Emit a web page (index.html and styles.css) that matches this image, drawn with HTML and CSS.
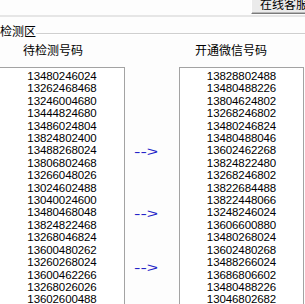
FILE: index.html
```html
<!DOCTYPE html>
<html>
<head>
    <meta charset="utf-8" />
    <title>检测区</title>
    <link rel="stylesheet" href="styles.css">
</head>
<body>
    <div class="top_bar">
        <button class="btn_service">在线客服</button>
    </div>
    <div class="top_line"></div>

    <div class="group_title">
        <span>检测区</span>
        <div class="group_line"></div>
    </div>

    <div class="check_grid">
        <div class="col_title col_title_left">待检测号码</div>
        <div></div>
        <div class="col_title col_title_right">开通微信号码</div>

        <div class="num_box">
            <div>13480246024</div>
            <div>13262468468</div>
            <div>13246004680</div>
            <div>13444824680</div>
            <div>13486024804</div>
            <div>13824802400</div>
            <div>13488268024</div>
            <div>13806802468</div>
            <div>13266048026</div>
            <div>13024602488</div>
            <div>13040024600</div>
            <div>13480468048</div>
            <div>13824822468</div>
            <div>13268046824</div>
            <div>13600480262</div>
            <div>13260268024</div>
            <div>13600462266</div>
            <div>13268026026</div>
            <div>13602600488</div>
        </div>

        <div class="arrow_col">
            <div class="arrow arrow_1">--&gt;</div>
            <div class="arrow arrow_2">--&gt;</div>
            <div class="arrow arrow_3">--&gt;</div>
        </div>

        <div class="num_box">
            <div>13828802488</div>
            <div>13480488226</div>
            <div>13804624802</div>
            <div>13268246802</div>
            <div>13480246824</div>
            <div>13480488046</div>
            <div>13602462268</div>
            <div>13824822480</div>
            <div>13268246802</div>
            <div>13822684488</div>
            <div>13822448066</div>
            <div>13248246024</div>
            <div>13606600880</div>
            <div>13480268024</div>
            <div>13602480268</div>
            <div>13488266024</div>
            <div>13686806602</div>
            <div>13480488226</div>
            <div>13046802682</div>
        </div>
    </div>
</body>
</html>
```

FILE: styles.css
```css
html,
body {
    margin: 0;
    height: 100%;
    overflow: hidden;
}

body {
    background: #fdfdfd;
    color: #000;
    font-family: "Liberation Sans", "Noto Sans CJK SC", sans-serif;
    font-size: 12px;
}

/* 顶部按钮栏 */
.top_bar {
    height: 14px;
    display: flex;
    justify-content: flex-end;
    overflow: hidden;
}

.btn_service {
    flex: none;
    width: 62px;
    height: 19px;
    margin: -5px -8px 0 0;
    padding: 0 0 0 8px;
    text-align: left;
    font-family: "Noto Sans CJK SC", sans-serif;
    font-size: 12px;
    line-height: 18px;
    color: #000;
    background: #ebebeb;
    border: 0;
    border-left: 1px solid #fff;
    border-bottom: 1px solid #7a7a7a;
    box-shadow: inset 0 -1px 0 #b8b8b8;
}

.top_line {
    height: 2px;
    margin-top: 1px;
    background: #e6e6e6;
}

/* 分组标题 */
.group_title {
    display: flex;
    margin-top: 7px;
    height: 14px;
    line-height: 14px;
    font-family: "Noto Sans CJK SC", sans-serif;
}

.group_title span {
    flex: none;
}

.group_line {
    flex: 1;
    margin-top: 9px;
    height: 0;
    border-top: 1px solid #cfcfcf;
    border-bottom: 1px solid #fff;
}

/* 检测区 */
.check_grid {
    display: grid;
    grid-template-columns: 126px 54px 125px;
    grid-template-rows: auto 1fr;
    margin-left: -1px;
}

.col_title {
    margin: 5px 0 10px;
    line-height: 14px;
    font-family: "Noto Sans CJK SC", sans-serif;
    font-size: 12px;
}

.col_title_left {
    padding-left: 24px;
}

.col_title_right {
    padding-left: 16px;
}

.num_box {
    height: 260px;
    padding-top: 2px;
    background: #fff;
    border: 1px solid #a3a3a3;
    text-align: center;
    font-size: 11.5px;
    line-height: 12.4px;
    letter-spacing: -0.1px;
    overflow: hidden;
}

.arrow_col {
    display: flex;
    flex-direction: column;
    align-items: flex-start;
    padding-left: 9px;
}

.arrow {
    line-height: 14px;
    color: #2424c8;
    font-family: "Liberation Sans", sans-serif;
    font-size: 12px;
    transform: scaleX(1.6);
    transform-origin: left center;
}

.arrow_1 {
    margin-top: 78px;
}

.arrow_2 {
    margin-top: 48px;
}

.arrow_3 {
    margin-top: 40px;
}
```
